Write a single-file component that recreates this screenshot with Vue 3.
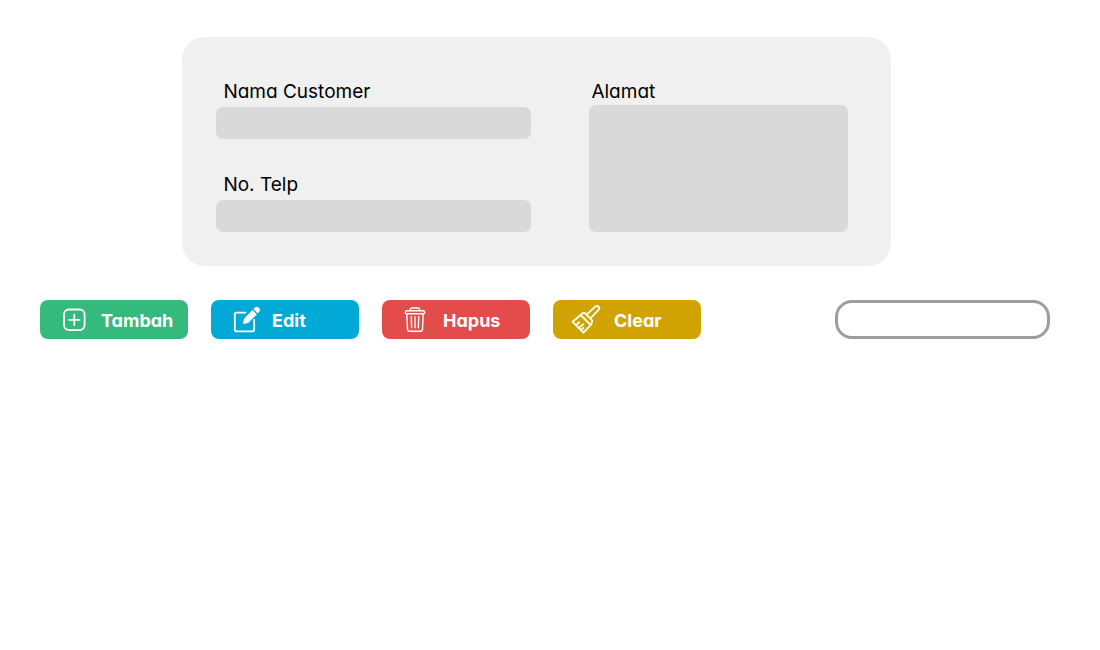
<script setup>
import { ref } from 'vue'

const name = ref('')
const phone = ref('')
const address = ref('')
const query = ref('')

function clearForm() {
  name.value = ''
  phone.value = ''
  address.value = ''
}
</script>

<template>
  <main class="page">
    <form id="customer" class="card" @submit.prevent>
      <div class="column">
        <div class="field">
          <label for="name">Nama Customer</label>
          <input id="name" v-model="name" type="text" />
        </div>
        <div class="field">
          <label for="phone">No. Telp</label>
          <input id="phone" v-model="phone" type="tel" />
        </div>
      </div>
      <div class="field address">
        <label for="address">Alamat</label>
        <textarea id="address" v-model="address"></textarea>
      </div>
    </form>

    <div class="toolbar">
      <button type="button" class="add">
        <svg viewBox="0 1 30 31" aria-hidden="true">
          <rect x="4" y="5.5" width="20.6" height="20.6" rx="5" />
          <path d="M14.3 10.6v10.400M9.100 15.800h10.400" />
        </svg>
        Tambah
      </button>
      <button type="button" class="edit">
        <svg viewBox="0 1 30 31" aria-hidden="true">
          <path d="M14.500 8.600H5.300a1.500 1.500 0 0 0-1.500 1.500v15.700a1.500 1.500 0 0 0 1.500 1.500h16.400a1.500 1.500 0 0 0 1.500-1.500V16" />
          <path class="solid" d="M12 19.900l1-5.200L21.400 6l4.500 4.400-8.700 8.500z" />
          <path class="solid" d="M22.300 5.100l1.200-1.200a3 3 0 0 1 4.400 4.300l-1.200 1.300z" />
        </svg>
        Edit
      </button>
      <button type="button" class="remove">
        <svg class="fine" viewBox="0 1 30 31" aria-hidden="true">
          <rect x="3.300" y="6.800" width="19.400" height="3" rx="1.400" />
          <path d="M8.300 6.800V5.600a1.600 1.600 0 0 1 1.600-1.600h6.200a1.600 1.600 0 0 1 1.600 1.600v1.200" />
          <path d="M4.800 9.800l.7 15.500a2 2 0 0 0 2 1.900h11a2 2 0 0 0 2-1.900l.7-15.500" />
          <path d="M9.300 12.700l.3 11M13 12.700v11M16.700 12.700l-.3 11" />
        </svg>
        Hapus
      </button>
      <button type="button" class="clear" @click="clearForm">
        <svg viewBox="0 1 30 31" aria-hidden="true">
          <path d="M7.700 11L-.5 17.700 10.400 28.700 17.700 21" />
          <path d="M7.700 11l1.600-1.400a2.200 2.200 0 0 1 3.200.1l6 5.900a2.200 2.200 0 0 1 .1 3.200L17.700 21z" />
          <path d="M13.600 10.600L22.300 2.700a2.200 2.200 0 0 1 3.200 3.200L17.400 14.500" />
          <path d="M3 21l3.300-2.700M5.600 23.700l4.700-3.500M8 26.200l2.300-2.400" />
        </svg>
        Clear
      </button>
      <input v-model="query" class="search" type="search" aria-label="Search" />
    </div>
  </main>
</template>

<style>
body {
  margin: 0;
  background: #fff;
}
</style>

<style scoped>
.page {
  padding: 37px 50px 37px 40px;
  font-family: Inter, "Liberation Sans", sans-serif;
  font-feature-settings: "cv11";
}

.page *,
.page {
  box-sizing: border-box;
}

.card {
  display: grid;
  grid-template-columns: 315fr 259fr;
  gap: 58px;
  width: 70.2%;
  margin-left: 14.1%;
  padding: 42px 43px 34px 34px;
  border-radius: 23px;
  background: #f0f0f0;
}

.column {
  display: flex;
  flex-direction: column;
  gap: 33px;
}

.field {
  display: flex;
  flex-direction: column;
}

.field label {
  padding: 0 7px;
  color: #000;
  font-size: 19px;
  line-height: 26px;
}

.field input,
.field textarea {
  width: 100%;
  border: 0;
  border-radius: 7px;
  background: #d9d9d9;
  color: #000;
  font: inherit;
  font-size: 16px;
  outline: none;
}

.field input {
  height: 32px;
  margin-top: 2px;
  padding: 0 10px;
}

.field textarea {
  flex: 1;
  padding: 8px 10px;
  resize: none;
}

.address label {
  padding: 0 2px;
}

.toolbar {
  display: flex;
  align-items: center;
  gap: 23px;
  margin-top: 34px;
}

.toolbar button {
  display: flex;
  align-items: center;
  gap: 11px;
  width: 148px;
  height: 39px;
  padding: 2px 0 0 20px;
  border: 0;
  border-radius: 8px;
  color: #fff;
  font: inherit;
  font-size: 18px;
  font-weight: 700;
  cursor: pointer;
}

.toolbar svg {
  flex: none;
  width: 30px;
  height: 31px;
  overflow: visible;
  fill: none;
  stroke: #fff;
  stroke-width: 1.8;
  stroke-linecap: round;
  stroke-linejoin: round;
}

.toolbar .fine {
  stroke-width: 1.4;
}

.toolbar .solid {
  fill: #fff;
  stroke: none;
}

.toolbar .add {
  background: #34ba7c;
}

.toolbar .edit {
  background: #02a8d6;
}

.toolbar .remove {
  background: #e34c4b;
}

.toolbar .clear {
  background: #d0a302;
}

.search {
  width: 215px;
  height: 39px;
  margin-left: auto;
  padding: 0 14px;
  border: 3px solid #9d9d9d;
  border-radius: 17px;
  background: #fff;
  font: inherit;
  font-size: 16px;
  outline: none;
  appearance: none;
}
</style>
